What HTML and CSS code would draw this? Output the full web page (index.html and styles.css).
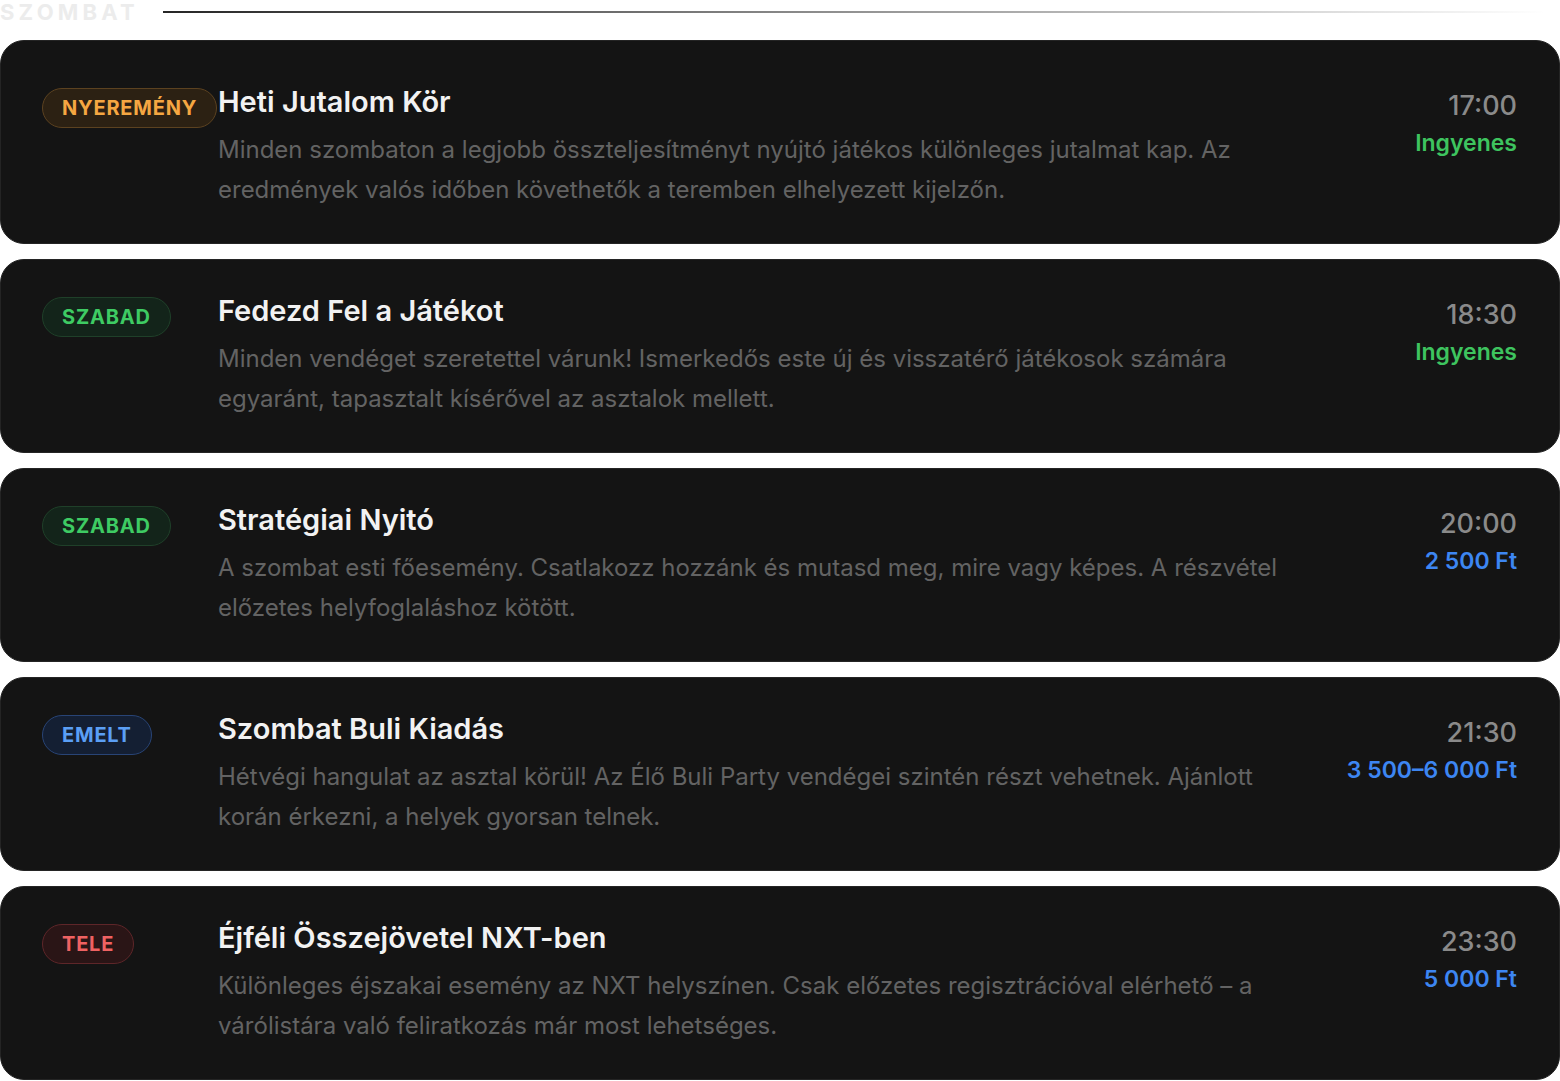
FILE: index.html
```html
<!DOCTYPE html>
<html lang="hu">
<head>
<meta charset="UTF-8">
<meta name="viewport" content="width=device-width, initial-scale=1.0">
<title>Szombat – Programok</title>
<link rel="stylesheet" href="styles.css">
</head>
<body>

<div class="day">
  <div class="day-header">
    <span class="day-name">Szombat</span>
    <span class="day-line"></span>
  </div>

  <div class="event event-first">
    <span class="badge badge-prize">Nyeremény</span>
    <div class="event-body">
      <h3 class="event-title">Heti Jutalom Kör</h3>
      <p class="event-desc">Minden szombaton a legjobb összteljesítményt nyújtó játékos különleges jutalmat kap. Az eredmények valós időben követhetők a teremben elhelyezett kijelzőn.</p>
    </div>
    <div class="event-meta">
      <div class="event-time">17:00</div>
      <div class="event-price price-free">Ingyenes</div>
    </div>
  </div>

  <div class="event">
    <span class="badge badge-open">Szabad</span>
    <div class="event-body">
      <h3 class="event-title">Fedezd Fel a Játékot</h3>
      <p class="event-desc">Minden vendéget szeretettel várunk! Ismerkedős este új és visszatérő játékosok számára egyaránt, tapasztalt kísérővel az asztalok mellett.</p>
    </div>
    <div class="event-meta">
      <div class="event-time">18:30</div>
      <div class="event-price price-free">Ingyenes</div>
    </div>
  </div>

  <div class="event">
    <span class="badge badge-open">Szabad</span>
    <div class="event-body">
      <h3 class="event-title">Stratégiai Nyitó</h3>
      <p class="event-desc">A szombat esti főesemény. Csatlakozz hozzánk és mutasd meg, mire vagy képes. A részvétel előzetes helyfoglaláshoz kötött.</p>
    </div>
    <div class="event-meta">
      <div class="event-time">20:00</div>
      <div class="event-price price-paid">2 500 Ft</div>
    </div>
  </div>

  <div class="event">
    <span class="badge badge-high">Emelt</span>
    <div class="event-body">
      <h3 class="event-title">Szombat Buli Kiadás</h3>
      <p class="event-desc">Hétvégi hangulat az asztal körül! Az Élő Buli Party vendégei szintén részt vehetnek. Ajánlott korán érkezni, a helyek gyorsan telnek.</p>
    </div>
    <div class="event-meta">
      <div class="event-time">21:30</div>
      <div class="event-price price-paid">3 500–6 000 Ft</div>
    </div>
  </div>

  <div class="event">
    <span class="badge badge-full">Tele</span>
    <div class="event-body">
      <h3 class="event-title">Éjféli Összejövetel NXT-ben</h3>
      <p class="event-desc">Különleges éjszakai esemény az NXT helyszínen. Csak előzetes regisztrációval elérhető – a várólistára való feliratkozás már most lehetséges.</p>
    </div>
    <div class="event-meta">
      <div class="event-time">23:30</div>
      <div class="event-price price-paid">5 000 Ft</div>
    </div>
  </div>
</div>

</body>
</html>
```

FILE: styles.css
```css
body {
  font-family: Inter, "Noto Sans", sans-serif;
  margin: 0;
  padding: 0;
  background-color: #ffffff;
}
.day {
  display: flex;
  flex-direction: column;
  gap: 15px;
}
.day-header {
  display: flex;
  align-items: center;
  gap: 24px;
  height: 24px;
  margin-bottom: 1px;
}
.day-name {
  font-size: 22px;
  font-weight: 700;
  line-height: 24px;
  letter-spacing: 4.2px;
  text-transform: uppercase;
  color: #ececec;
}
.day-line {
  flex: 1;
  height: 2px;
  margin-right: 14px;
  background: linear-gradient(to right, #262626, rgba(38, 38, 38, 0));
}
.event {
  display: grid;
  grid-template-columns: 160px 1fr auto;
  column-gap: 16px;
  align-items: start;
  padding: 33px 42px 33px 41px;
  background-color: #141414;
  border: 1px solid #242424;
  border-radius: 24px;
}
.event-first {
  padding-top: 43px;
}
.badge {
  justify-self: start;
  margin-top: 4px;
  padding: 0 19px;
  height: 40px;
  line-height: 38px;
  box-sizing: border-box;
  border-radius: 20px;
  border: 1px solid;
  font-size: 20px;
  font-weight: 700;
  letter-spacing: 0.8px;
  text-transform: uppercase;
  white-space: nowrap;
}
.badge-prize {
  color: #f5a742;
  background-color: #2c2113;
  border-color: #5c4220;
}
.badge-open {
  color: #3ecb63;
  background-color: #13241a;
  border-color: #1f4029;
}
.badge-high {
  color: #5b9ff5;
  background-color: #141f33;
  border-color: #284476;
}
.badge-full {
  color: #ef6262;
  background-color: #2a1516;
  border-color: #5e2629;
}
.event-title {
  margin: 0;
  font-size: 29px;
  font-weight: 600;
  line-height: 36px;
  color: #f2f2f2;
}
.event-desc {
  margin: 10px 0 0;
  max-width: 1080px;
  font-size: 24px;
  line-height: 40px;
  color: #636363;
}
.event-meta {
  margin-top: 2px;
  text-align: right;
}
.event-time {
  font-size: 27px;
  font-weight: 500;
  line-height: 40px;
  color: #8a8a8a;
}
.event-price {
  font-size: 23px;
  font-weight: 600;
  line-height: 34px;
}
.price-free {
  color: #3ec45f;
}
.price-paid {
  color: #3d86f2;
}
```
